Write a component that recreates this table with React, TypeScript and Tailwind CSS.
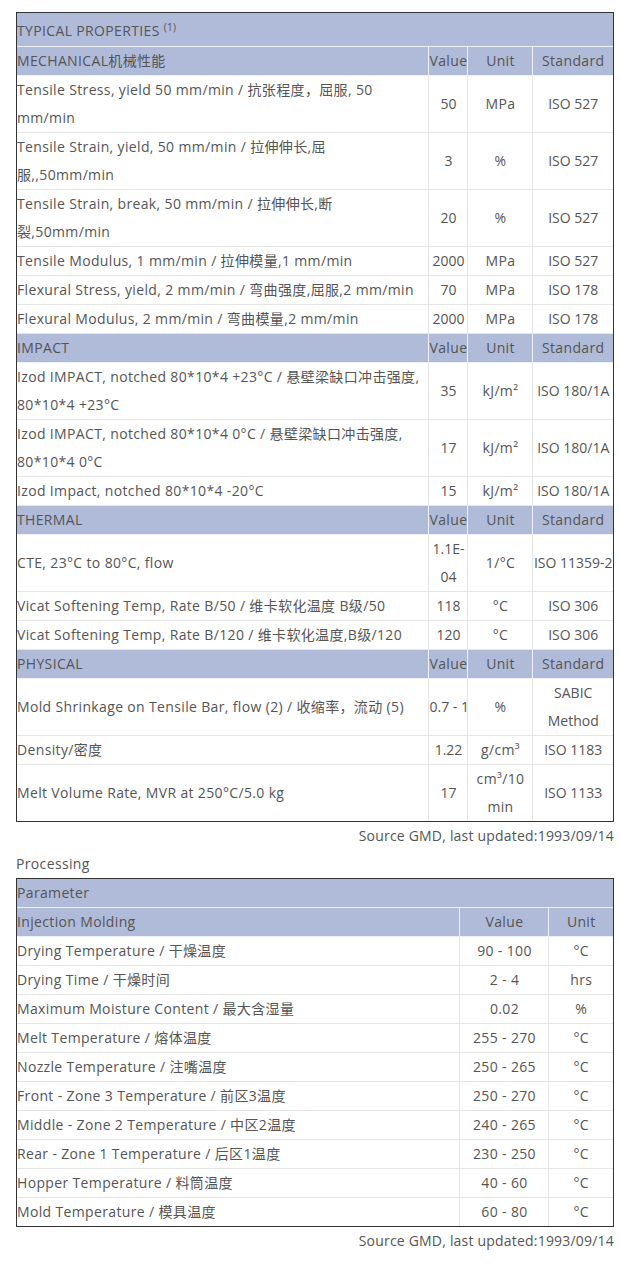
import React from "react";

type Row = {
  name: React.ReactNode;
  value: React.ReactNode;
  unit: React.ReactNode;
  standard?: React.ReactNode;
};

type Section = {
  title: string;
  rows: Row[];
};

const sections: Section[] = [
  {
    title: "MECHANICAL机械性能",
    rows: [
      {
        name: (
          <>
            Tensile Stress, yield 50 mm/min / 抗张程度，屈服, 50
            <br />
            mm/min
          </>
        ),
        value: "50",
        unit: "MPa",
        standard: "ISO 527",
      },
      {
        name: (
          <>
            Tensile Strain, yield, 50 mm/min / 拉伸伸长,屈
            <br />
            服,,50mm/min
          </>
        ),
        value: "3",
        unit: "%",
        standard: "ISO 527",
      },
      {
        name: (
          <>
            Tensile Strain, break, 50 mm/min / 拉伸伸长,断
            <br />
            裂,50mm/min
          </>
        ),
        value: "20",
        unit: "%",
        standard: "ISO 527",
      },
      { name: "Tensile Modulus, 1 mm/min / 拉伸模量,1 mm/min", value: "2000", unit: "MPa", standard: "ISO 527" },
      { name: "Flexural Stress, yield, 2 mm/min / 弯曲强度,屈服,2 mm/min", value: "70", unit: "MPa", standard: "ISO 178" },
      { name: "Flexural Modulus, 2 mm/min / 弯曲模量,2 mm/min", value: "2000", unit: "MPa", standard: "ISO 178" },
    ],
  },
  {
    title: "IMPACT",
    rows: [
      {
        name: (
          <>
            Izod IMPACT, notched 80*10*4 +23°C / 悬壁梁缺口冲击强度,
            <br />
            80*10*4 +23°C
          </>
        ),
        value: "35",
        unit: "kJ/m²",
        standard: "ISO 180/1A",
      },
      {
        name: (
          <>
            Izod IMPACT, notched 80*10*4 0°C / 悬壁梁缺口冲击强度,
            <br />
            80*10*4 0°C
          </>
        ),
        value: "17",
        unit: "kJ/m²",
        standard: "ISO 180/1A",
      },
      { name: "Izod Impact, notched 80*10*4 -20°C", value: "15", unit: "kJ/m²", standard: "ISO 180/1A" },
    ],
  },
  {
    title: "THERMAL",
    rows: [
      {
        name: "CTE, 23°C to 80°C, flow",
        value: (
          <>
            1.1E-
            <br />
            04
          </>
        ),
        unit: "1/°C",
        standard: "ISO 11359-2",
      },
      { name: "Vicat Softening Temp, Rate B/50 / 维卡软化温度 B级/50", value: "118", unit: "°C", standard: "ISO 306" },
      { name: "Vicat Softening Temp, Rate B/120 / 维卡软化温度,B级/120", value: "120", unit: "°C", standard: "ISO 306" },
    ],
  },
  {
    title: "PHYSICAL",
    rows: [
      {
        name: "Mold Shrinkage on Tensile Bar, flow (2) / 收缩率，流动 (5)",
        value: "0.7 - 1",
        unit: "%",
        standard: (
          <>
            SABIC
            <br />
            Method
          </>
        ),
      },
      { name: "Density/密度", value: "1.22", unit: "g/cm³", standard: "ISO 1183" },
      {
        name: "Melt Volume Rate, MVR at 250°C/5.0 kg",
        value: "17",
        unit: (
          <>
            cm³/10
            <br />
            min
          </>
        ),
        standard: "ISO 1133",
      },
    ],
  },
];

const processing: Row[] = [
  { name: "Drying Temperature / 干燥温度", value: "90 - 100", unit: "°C" },
  { name: "Drying Time / 干燥时间", value: "2 - 4", unit: "hrs" },
  { name: "Maximum Moisture Content / 最大含湿量", value: "0.02", unit: "%" },
  { name: "Melt Temperature / 熔体温度", value: "255 - 270", unit: "°C" },
  { name: "Nozzle Temperature / 注嘴温度", value: "250 - 265", unit: "°C" },
  { name: "Front - Zone 3 Temperature / 前区3温度", value: "250 - 270", unit: "°C" },
  { name: "Middle - Zone 2 Temperature / 中区2温度", value: "240 - 265", unit: "°C" },
  { name: "Rear - Zone 1 Temperature / 后区1温度", value: "230 - 250", unit: "°C" },
  { name: "Hopper Temperature / 料筒温度", value: "40 - 60", unit: "°C" },
  { name: "Mold Temperature / 模具温度", value: "60 - 80", unit: "°C" },
];

const cell = "border-b border-r border-[#e6e6e6] last:border-r-0 whitespace-nowrap align-middle p-0";
const headCell = "border-b border-r border-[#eef0f7] last:border-r-0 whitespace-nowrap align-middle p-0";

export default function App() {
  return (
    <div
      className="bg-white text-[14px] leading-[28px] tracking-[0.35px] text-[#555] pt-[12px] pl-[16px] w-[620px]"
      style={{ fontFamily: '"Open Sans", "Noto Sans CJK SC", sans-serif' }}
    >
      <div className="w-[598px] border border-[#333]">
        <table className="w-full table-fixed border-collapse [&_tr:last-child_td]:border-b-0">
          <colgroup>
            <col />
            <col className="w-[39px]" />
            <col className="w-[65px]" />
            <col className="w-[80px]" />
          </colgroup>
          <tbody>
            <tr className="bg-[#b0bad9]">
              <td colSpan={4} className={`${headCell} pt-[4px] pb-[1px]`}>
                TYPICAL PROPERTIES <sup className="text-[10px]">(1)</sup>
              </td>
            </tr>
            {sections.map((s) => (
              <React.Fragment key={s.title}>
                <tr className="bg-[#b0bad9]">
                  <td className={headCell}>{s.title}</td>
                  <td className={`${headCell} text-center`}>Value</td>
                  <td className={`${headCell} text-center`}>Unit</td>
                  <td className={`${headCell} text-center`}>Standard</td>
                </tr>
                {s.rows.map((r, i) => (
                  <tr key={i}>
                    <td className={cell}>{r.name}</td>
                    <td className={`${cell} text-center tracking-normal`}>{r.value}</td>
                    <td className={`${cell} text-center`}>{r.unit}</td>
                    <td className={`${cell} text-center tracking-normal`}>{r.standard}</td>
                  </tr>
                ))}
              </React.Fragment>
            ))}
          </tbody>
        </table>
      </div>
      <p className="w-[598px] text-right tracking-[0.2px]">Source GMD, last updated:1993/09/14</p>
      <p>Processing</p>
      <div className="w-[598px] border border-[#333]">
        <table className="w-full table-fixed border-collapse [&_tr:last-child_td]:border-b-0">
          <colgroup>
            <col />
            <col className="w-[89px]" />
            <col className="w-[64px]" />
          </colgroup>
          <tbody>
            <tr className="bg-[#b0bad9]">
              <td colSpan={3} className={headCell}>
                Parameter
              </td>
            </tr>
            <tr className="bg-[#b0bad9]">
              <td className={headCell}>Injection Molding</td>
              <td className={`${headCell} text-center`}>Value</td>
              <td className={`${headCell} text-center`}>Unit</td>
            </tr>
            {processing.map((r, i) => (
              <tr key={i}>
                <td className={cell}>{r.name}</td>
                <td className={`${cell} text-center`}>{r.value}</td>
                <td className={`${cell} text-center`}>{r.unit}</td>
              </tr>
            ))}
          </tbody>
        </table>
      </div>
      <p className="w-[598px] text-right tracking-[0.2px]">Source GMD, last updated:1993/09/14</p>
    </div>
  );
}
